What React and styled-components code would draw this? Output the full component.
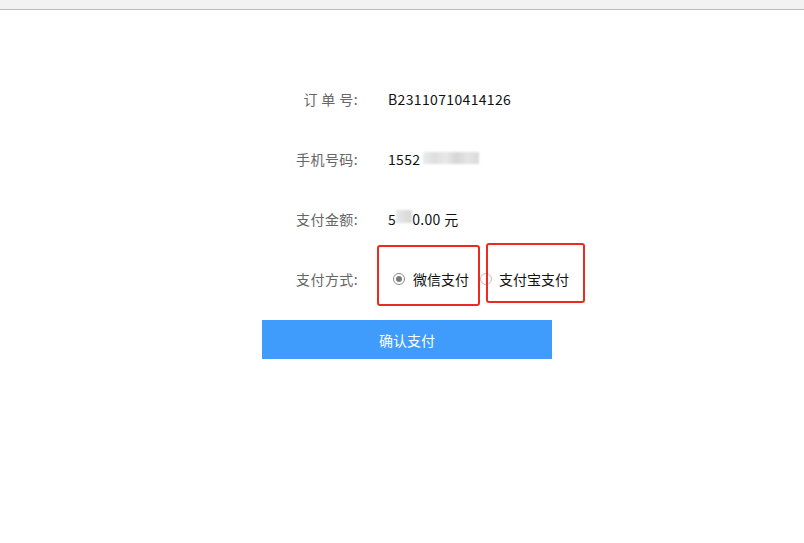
import React from "react";
import styled, { createGlobalStyle } from "styled-components";

const Global = createGlobalStyle`
  html, body { margin: 0; padding: 0; background: #fff; }
  body { font-family: "Noto Sans CJK SC", "Microsoft YaHei", sans-serif; font-size: 14px; }
`;

const TopBar = styled.div`
  height: 9px;
  background: #f2f2f2;
  border-bottom: 1px solid #b9b9b9;
`;

const Form = styled.div`
  padding-top: 59px;
  margin-left: 262px;
  width: 290px;
`;

const Row = styled.div`
  display: flex;
  align-items: center;
  height: 60px;
`;

const Label = styled.div`
  width: 96px;
  flex: none;
  text-align: right;
  color: #666;
  letter-spacing: 0.4px;
  white-space: pre;
`;

const Value = styled.div`
  margin-left: 30px;
  color: #111;
  display: flex;
  align-items: center;
  position: relative;
  white-space: nowrap;
  letter-spacing: ${(p) => (p.$num ? "0.35px" : "0")};
`;

const Mosaic = styled.span`
  display: inline-block;
  width: ${(p) => p.$w}px;
  height: ${(p) => p.$h}px;
  margin-top: ${(p) => p.$mt || 0}px;
  margin-left: ${(p) => p.$ml || 0}px;
  background: ${(p) => p.$bg};
  filter: blur(1.2px);
`;

const RadioItem = styled.label`
  display: flex;
  align-items: center;
  margin-left: ${(p) => p.$ml}px;
  color: #111;
`;

const Circle = styled.span`
  width: 12px;
  height: 12px;
  box-sizing: border-box;
  border-radius: 50%;
  border: 1px solid ${(p) => (p.$checked ? "#8a8a8a" : "#bdbdbd")};
  display: flex;
  align-items: center;
  justify-content: center;
  margin-right: ${(p) => p.$mr}px;
  background: #fff;
  &::after {
    content: "";
    display: ${(p) => (p.$checked ? "block" : "none")};
    width: 6px;
    height: 6px;
    border-radius: 50%;
    background: #7a7a7a;
  }
`;

const Annot = styled.span`
  position: absolute;
  left: ${(p) => p.$l}px;
  top: ${(p) => p.$t}px;
  width: ${(p) => p.$w}px;
  height: ${(p) => p.$h}px;
  box-sizing: border-box;
  border: 2.5px solid #ec2a22;
  border-radius: 3px;
  pointer-events: none;
`;

const Button = styled.button`
  margin-top: 11px;
  width: 290px;
  height: 39px;
  border: none;
  background: #3f9cfd;
  color: #fff;
  font-family: inherit;
  font-size: 14px;
  font-weight: 400;
`;

export default function App() {
  return (
    <>
      <Global />
      <TopBar />
      <Form>
        <Row>
          <Label>订 单 号:</Label>
          <Value $num>B23110710414126</Value>
        </Row>
        <Row>
          <Label>手机号码:</Label>
          <Value $num>
            1552
            <Mosaic $ml={3} $w={56} $h={12} $mt={-3} $bg="linear-gradient(90deg,#ececec 0%,#dedede 20%,#e8e8e8 40%,#d6d6d6 60%,#e4e4e4 80%,#dadada 100%)" />
          </Value>
        </Row>
        <Row>
          <Label>支付金额:</Label>
          <Value $num>
            5
            <Mosaic $w={16} $h={13} $mt={-6} $bg="linear-gradient(90deg,#e8e8e8,#d8d8d8)" />
            0.00 元
          </Value>
        </Row>
        <Row>
          <Label>支付方式:</Label>
          <Value>
            <RadioItem $ml={5}>
              <Circle $checked $mr={8} />
              微信支付
            </RadioItem>
            <RadioItem $ml={11}>
              <Circle $mr={7} />
              支付宝支付
            </RadioItem>
            <Annot $l={-11} $t={-24} $w={103} $h={61} />
            <Annot $l={98} $t={-26} $w={99} $h={60} />
          </Value>
        </Row>
        <Button>确认支付</Button>
      </Form>
    </>
  );
}
